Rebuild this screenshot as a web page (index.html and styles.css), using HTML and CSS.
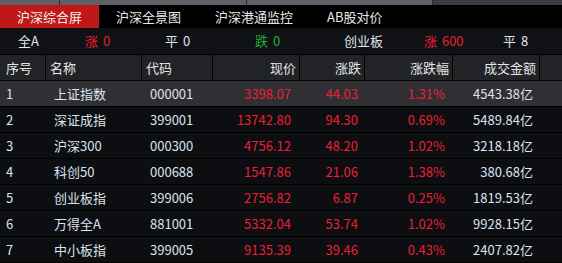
FILE: index.html
```html
<!DOCTYPE html>
<html lang="zh">
<head>
<meta charset="utf-8">
<link rel="stylesheet" href="styles.css">
</head>
<body>
<div class="screen">
  <div class="strip">
    <div class="seg s1"></div>
    <div class="seg s2"></div>
    <div class="seg s3"></div>
    <div class="seg s4"></div>
  </div>
  <div class="tabs">
    <div class="tab active">沪深综合屏</div>
    <div class="tab">沪深全景图</div>
    <div class="tab">沪深港通监控</div>
    <div class="tab">AB股对价</div>
  </div>
  <div class="summary">
    <div class="si w1">全A</div>
    <div class="si w2 up">涨 0</div>
    <div class="si w3">平 0</div>
    <div class="si w4 down">跌 0</div>
    <div class="si w5">创业板</div>
    <div class="si w6 up">涨 600</div>
    <div class="si w7">平 8</div>
  </div>
  <div class="grid">
    <div class="row head">
      <div class="c c1">序号</div>
      <div class="c c2">名称</div>
      <div class="c c3">代码</div>
      <div class="c c4 r">现价</div>
      <div class="c c5 r">涨跌</div>
      <div class="c c6 r">涨跌幅</div>
      <div class="c c7 r">成交金额</div>
      <div class="c c8"></div>
    </div>
    <div class="row sel">
      <div class="c c1">1</div><div class="c c2">上证指数</div><div class="c c3">000001</div>
      <div class="c c4 r up">3398.07</div><div class="c c5 r up">44.03</div><div class="c c6 r up">1.31%</div>
      <div class="c c7 r">4543.38亿</div><div class="c c8"></div>
    </div>
    <div class="row">
      <div class="c c1">2</div><div class="c c2">深证成指</div><div class="c c3">399001</div>
      <div class="c c4 r up">13742.80</div><div class="c c5 r up">94.30</div><div class="c c6 r up">0.69%</div>
      <div class="c c7 r">5489.84亿</div><div class="c c8"></div>
    </div>
    <div class="row">
      <div class="c c1">3</div><div class="c c2">沪深300</div><div class="c c3">000300</div>
      <div class="c c4 r up">4756.12</div><div class="c c5 r up">48.20</div><div class="c c6 r up">1.02%</div>
      <div class="c c7 r">3218.18亿</div><div class="c c8"></div>
    </div>
    <div class="row">
      <div class="c c1">4</div><div class="c c2">科创50</div><div class="c c3">000688</div>
      <div class="c c4 r up">1547.86</div><div class="c c5 r up">21.06</div><div class="c c6 r up">1.38%</div>
      <div class="c c7 r">380.68亿</div><div class="c c8"></div>
    </div>
    <div class="row">
      <div class="c c1">5</div><div class="c c2">创业板指</div><div class="c c3">399006</div>
      <div class="c c4 r up">2756.82</div><div class="c c5 r up">6.87</div><div class="c c6 r up">0.25%</div>
      <div class="c c7 r">1819.53亿</div><div class="c c8"></div>
    </div>
    <div class="row">
      <div class="c c1">6</div><div class="c c2">万得全A</div><div class="c c3">881001</div>
      <div class="c c4 r up">5332.04</div><div class="c c5 r up">53.74</div><div class="c c6 r up">1.02%</div>
      <div class="c c7 r">9928.15亿</div><div class="c c8"></div>
    </div>
    <div class="row">
      <div class="c c1">7</div><div class="c c2">中小板指</div><div class="c c3">399005</div>
      <div class="c c4 r up">9135.39</div><div class="c c5 r up">39.46</div><div class="c c6 r up">0.43%</div>
      <div class="c c7 r">2407.82亿</div><div class="c c8"></div>
    </div>
  </div>
</div>
</body>
</html>
```

FILE: styles.css
```css
html, body {
  margin: 0;
  padding: 0;
  background: #0c0d11;
}
.screen {
  width: 562px;
  height: 263px;
  overflow: hidden;
  font-family: "Noto Sans CJK SC", "Microsoft YaHei", sans-serif;
  font-size: 13px;
  color: #dfe3ea;
}
.strip {
  display: flex;
  height: 5px;
}
.seg {
  height: 5px;
  background: #606068;
  border-right: 1px solid #2a2a30;
}
.s1 { width: 59px; }
.s2 { width: 186px; }
.s3 { width: 185px; }
.s4 { flex: 1; background: #3a3a42; border-right: 0; }

.tabs {
  display: flex;
  height: 23px;
  background: #000;
}
.tab {
  padding: 0 17px;
  line-height: 23px;
  color: #e8e8e8;
  white-space: nowrap;
}
.tab.active {
  background: #c01717;
  color: #f2f2f2;
}

.summary {
  display: flex;
  height: 26px;
  line-height: 26px;
  background: #0f1115;
  border-bottom: 1px solid #000;
  padding-left: 18px;
  color: #e3e6ea;
  word-spacing: 2px;
}
.si { white-space: nowrap; }
.w1 { width: 67px; }
.w2 { width: 80px; }
.w3 { width: 90px; }
.w4 { width: 89px; }
.w5 { width: 80px; }
.w6 { width: 79px; }
.up { color: #ec2030; }
.down { color: #1fae3c; }

.grid {
  display: flex;
  flex-direction: column;
}
.row {
  display: flex;
  height: 25px;
  line-height: 25px;
  border-bottom: 1px solid #000;
  background: #0c0e12;
  color: #dde3ec;
}
.row.head {
  background: #222327;
  color: #e6e6e6;
}
.row.sel {
  background: #303034;
}
.c {
  white-space: nowrap;
  box-sizing: border-box;
}
.head .c {
  border-right: 1px solid #000;
}
.head .c8 { border-right: 0; }
.c1 { width: 46px; padding-left: 5px; }
.c2 { width: 96px; padding-left: 6px; }
.c3 { width: 71px; padding-left: 6px; }
.c4 { width: 87px; }
.c5 { width: 65px; }
.c6 { width: 88px; }
.c7 { width: 87px; }
.c8 { flex: 1; }
.r { text-align: right; }
.row .c4 { padding-right: 9px; }
.row .c5 { padding-right: 7px; }
.row .c6 { padding-right: 8px; }
.row .c7 { padding-right: 7px; }
.head .c4, .head .c5, .head .c6, .head .c7 { padding-right: 3px; }
.row .c2, .row .c3 { padding-left: 8px; }
.head .c2, .head .c3 { padding-left: 4px; }
.head .c1 { padding-left: 5px; }
.row .c1 { padding-left: 6px; }
```
